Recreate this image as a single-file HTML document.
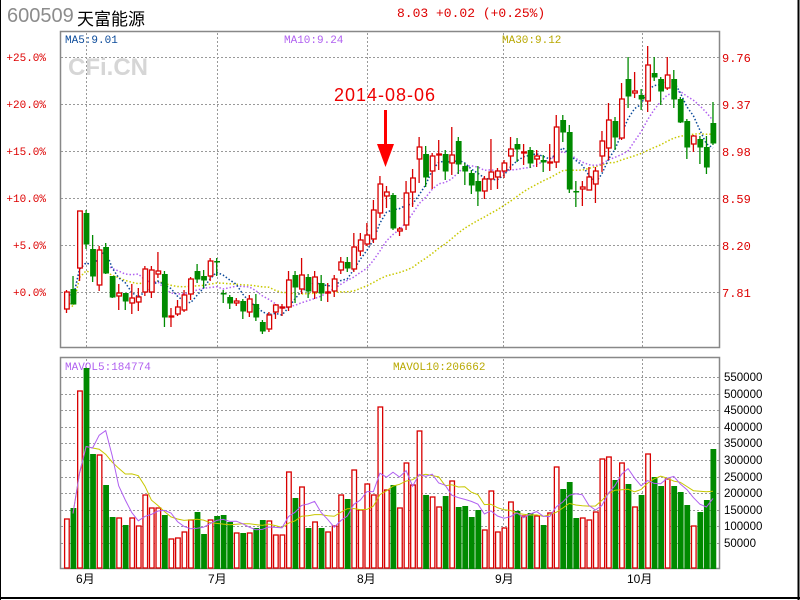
<!DOCTYPE html>
<html><head><meta charset="utf-8"><style>
html,body{margin:0;padding:0;background:#fff;}
#w{position:relative;width:800px;height:600px;overflow:hidden;background:#fff;font-family:"Liberation Mono",monospace;}
.t{position:absolute;white-space:nowrap;}
</style></head><body><div id="w">
<div class="t" style="left:7px;top:5px;font:20px 'Liberation Sans',sans-serif;color:#8c8c8c;">600509</div>
<div class="t" style="left:77px;top:5px;font:17px 'Liberation Sans','Noto Sans CJK SC',sans-serif;color:#000;">天富能源</div>
<div class="t" style="left:397px;top:6px;font:13px 'Liberation Mono',monospace;color:#d00;">8.03 +0.02 (+0.25%)</div>
<svg id="s" width="800" height="600" style="position:absolute;left:0;top:0"></svg>
</div>
<script>
var NS="http://www.w3.org/2000/svg",s=document.getElementById('s');
function el(n,a,t){var e=document.createElementNS(NS,n);for(var k in a)e.setAttribute(k,a[k]);if(t!=null)e.textContent=t;s.appendChild(e);return e;}
// outer border
el('line',{x1:0.5,y1:0,x2:0.5,y2:600,stroke:'#000','stroke-width':1});
el('line',{x1:798.5,y1:0,x2:798.5,y2:600,stroke:'#000','stroke-width':2});
el('line',{x1:0,y1:598,x2:800,y2:598,stroke:'#000','stroke-width':2});
// watermark
el('text',{x:68,y:75,'font-family':'Liberation Sans,sans-serif','font-weight':'bold','font-size':24,fill:'#d6d6d6'},'CFi.CN');
// grids
var gp={stroke:'#999','stroke-width':1,'stroke-dasharray':'2 2'};
[57,104,151,198,245,292].forEach(function(y){el('line',Object.assign({x1:61,x2:719,y1:y+.5,y2:y+.5},gp));});
[86,217,367,503,642].forEach(function(x){el('line',Object.assign({x1:x+.5,x2:x+.5,y1:33,y2:347},gp));el('line',Object.assign({x1:x+.5,x2:x+.5,y1:359,y2:568},gp));});
for(var k=0;k<11;k++){var y=543-k*16.6;el('line',Object.assign({x1:61,x2:719,y1:Math.round(y)+.5,y2:Math.round(y)+.5},gp));}
el('rect',{x:60.5,y:31.5,width:659,height:316,fill:'none',stroke:'#888','stroke-width':1.5});
el('rect',{x:60.5,y:357.5,width:659,height:211,fill:'none',stroke:'#888','stroke-width':1.5});
// labels
var pl=['+25.0%','+20.0%','+15.0%','+10.0%','+5.0%','+0.0%'],pr=['9.76','9.37','8.98','8.59','8.20','7.81'];
[57,104,151,198,245,292].forEach(function(y,i){
 el('text',{x:46,y:y+4,'text-anchor':'end','font-family':'Liberation Mono,monospace','font-size':11,fill:'#d00'},pl[i]);
 el('text',{x:722,y:y+5,'font-family':'Liberation Mono,monospace','font-size':12,fill:'#d00'},pr[i]);});
for(var k=1;k<=11;k++){el('text',{x:724,y:Math.round(543-(k-1)*16.6)+4,'font-family':'Liberation Sans,sans-serif','font-size':11.5,fill:'#000'},(k*50000)+'');}
el('text',{x:65,y:43,'font-family':'Liberation Mono,monospace','font-size':11,fill:'#0a4a9a'},'MA5:9.01');
el('text',{x:284,y:43,'font-family':'Liberation Mono,monospace','font-size':11,fill:'#b060f0'},'MA10:9.24');
el('text',{x:502,y:43,'font-family':'Liberation Mono,monospace','font-size':11,fill:'#b8a800'},'MA30:9.12');
el('text',{x:65,y:370,'font-family':'Liberation Mono,monospace','font-size':11,fill:'#b060f0'},'MAVOL5:184774');
el('text',{x:393,y:370,'font-family':'Liberation Mono,monospace','font-size':11,fill:'#b8a800'},'MAVOL10:206662');
[['6月',76],['7月',208],['8月',357],['9月',495],['10月',627]].forEach(function(m){el('text',{x:m[1],y:583,'font-family':'Liberation Sans,Noto Sans CJK SC,sans-serif','font-size':12,fill:'#000'},m[0]);});
el('text',{x:334,y:101,'font-family':'Liberation Sans,sans-serif','font-size':18,fill:'#e00',textLength:101},'2014-08-06');
el('rect',{x:384,y:110,width:3,height:38,fill:'#f00'});
el('polygon',{points:'377,144 394,144 385.5,167',fill:'#f00'});
// candles
var D="r 292 309 290 313|g 289 304 276 304|r 211 268 211 281|g 213 244 210 249|g 249 276 235 282|r 250 285 246 291|g 247 273 243 274|g 276 297 276 298|r 293 296 284 310|g 293 301 293 310|r 298 303 284 314|r 297 302 288 311|r 269 292 266 296|r 270 292 266 298|r 271 274 252 278|g 274 317 271 327|r 316 317 308 327|r 307 314 300 316|r 295 310 290 312|r 279 294 277 300|g 271 279 264 283|g 276 280 270 288|r 261 276 258 281|g 261 262 258 276|g 293 294 290 303|g 297 303 295 309|r 301 303 298 306|g 301 311 299 319|r 299 312 295 317|g 304 317 294 321|g 322 331 320 334|r 315 329 312 332|r 305 312 304 319|r 307 308 304 316|r 280 307 271 311|g 275 287 271 303|r 275 289 258 294|g 277 291 274 298|r 277 292 271 299|g 283 293 275 301|r 292 293 283 302|r 279 291 275 297|r 262 270 257 274|g 262 268 257 272|r 247 269 233 272|r 240 251 233 256|r 235 244 223 246|r 210 239 200 243|r 184 213 176 218|r 192 196 186 208|g 195 228 193 230|r 229 231 227 236|r 193 225 181 230|r 178 192 169 207|r 147 159 137 183|g 154 177 146 187|r 156 171 153 189|r 154 155 140 170|g 154 171 150 180|r 155 163 127 175|g 141 164 137 174|g 166 171 163 185|g 173 185 170 194|g 181 191 166 206|r 179 191 176 199|r 172 179 139 190|r 171 177 168 189|r 163 171 160 178|r 149 156 137 170|g 144 149 138 162|r 152 153 144 165|g 150 163 147 168|r 156 159 150 167|g 160 162 155 172|r 162 163 144 171|r 127 162 115 168|g 120 132 115 142|g 132 189 125 193|g 191 192 181 207|r 187 189 181 206|r 177 190 167 190|r 171 184 167 203|r 141 156 131 172|r 120 148 103 160|g 121 137 117 150|r 99 138 83 140|g 79 96 57 108|r 91 93 72 98|g 95 99 89 110|r 65 101 46 112|g 73 77 57 81|g 79 91 77 105|r 75 88 57 90|g 79 99 70 108|g 99 122 97 123|g 121 147 119 159|r 136 144 135 152|g 139 147 136 164|g 147 167 136 174|g 123 143 102 145".split('|').map(function(r){var p=r.split(' ');return [p[0],+p[1],+p[2],+p[3],+p[4]];});
var V=[519,508,391,368,454,455,485,517,518,525,518,526,495,508,508,515,539,538,532,520,512,534,520,516,515,522,533,533,533,528,520,521,535,535,472,498,487,528,522,528,532,526,495,499,470,510,484,495,407,490,485,508,463,485,431,495,497,507,496,481,507,506,517,510,530,491,532,528,502,511,516,513,516,525,513,467,489,482,518,518,520,512,459,457,480,463,484,507,495,454,477,486,479,486,492,505,526,512,500,449];
var R='#d80000',G='#008a00';
function X(i){return 64+i*6.53;}
function ma(arr,n){return arr.map(function(v,i){var a=Math.max(0,i-n+1),t=0;for(var j=a;j<=i;j++)t+=arr[j];return t/(i-a+1);});}
function line(arr,col,dash,start,off){var pts=[];arr.forEach(function(v,i){if(i>=start)pts.push((X(i)+off).toFixed(1)+','+v.toFixed(1));});var a={points:pts.join(' '),fill:'none',stroke:col,'stroke-width':dash?1.5:1};if(dash)a['stroke-dasharray']='1.5 2';el('polyline',a);}
var C=D.map(function(d){return d[0]=='r'?d[1]:d[2];});
line(ma(C,30).map(function(v,i){return v+ (i<30?(30-i)*0.3:0);}),'#c8c800',1,0,2.5);
line(ma(C,10),'#b060f0',1,0,2.5);
line(ma(C,5),'#0a4a9a',1,0,2.5);
D.forEach(function(d,i){var x=X(i),c=d[0]=='r'?R:G;
 el('line',{x1:x+2.5,x2:x+2.5,y1:d[3],y2:d[4],stroke:c,'stroke-width':1.3});
 var h=Math.max(1,d[2]-d[1]);
 if(d[0]=='r')el('rect',{x:x+0.6,y:d[1],width:4.6,height:h,fill:'#fff',stroke:c,'stroke-width':1.3});
 else el('rect',{x:x,y:d[1],width:5.8,height:h+0.5,fill:c});
});
// volume
V.forEach(function(v,i){var x=X(i);if(D[i][0]=='r')el('rect',{x:x+0.6,y:v,width:4.6,height:568-v,fill:'#fff',stroke:R,'stroke-width':1.3});else el('rect',{x:x,y:v,width:5.8,height:569-v,fill:G});});
var VH=V.map(function(v){return 569-v;});
line(ma(VH,10).map(function(h){return 569-h;}),'#c8c800',0,1,2.5);
line(ma(VH,5).map(function(h){return 569-h;}),'#b060f0',0,1,2.5);
</script>
</body></html>
